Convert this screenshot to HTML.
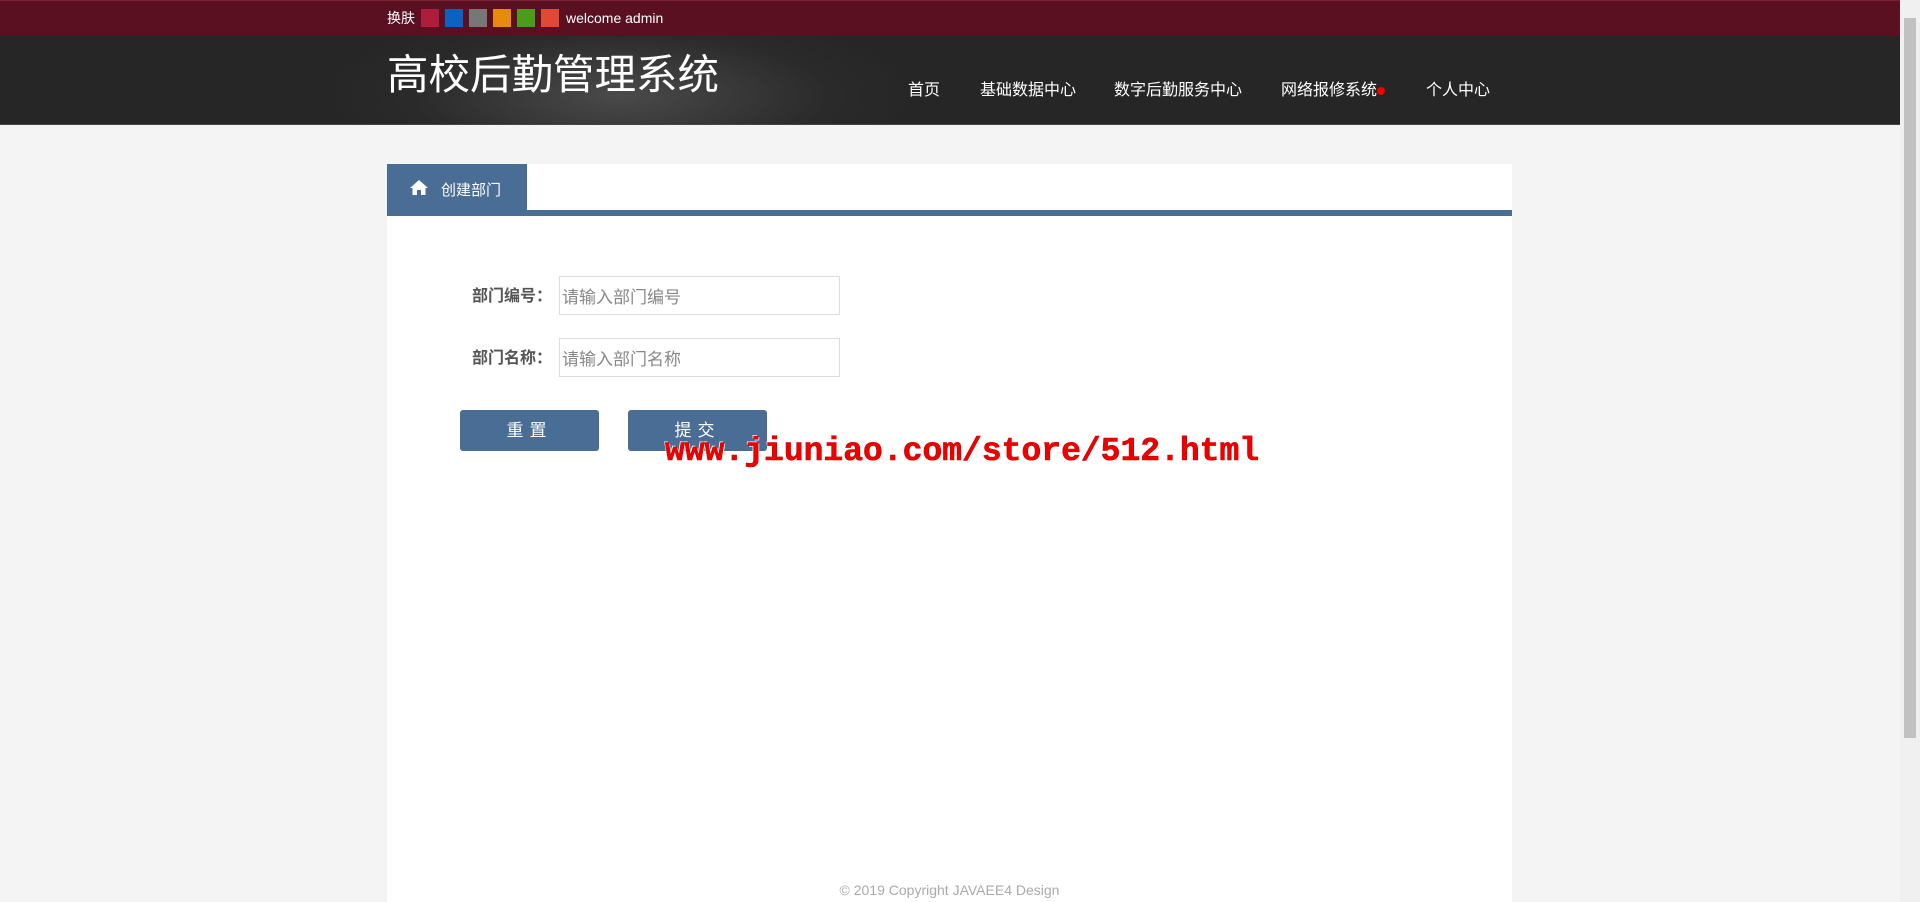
<!DOCTYPE html>
<html><head><meta charset="utf-8"><style>
*{margin:0;padding:0;box-sizing:border-box}
body{width:1920px;height:902px;overflow:hidden;background:#f4f4f4;font-family:"Liberation Sans","Noto Sans CJK SC",sans-serif;position:relative}
.top{position:absolute;left:0;top:0;width:1900px;height:36px;background:#5a1020;border-top:1px solid #7a2030}
.top .in{position:absolute;left:387px;top:7px;font-size:14px;color:#fff;display:flex;align-items:center}
.sw{width:18px;height:18px;display:inline-block;margin-left:6px}
.hdr{position:absolute;left:0;top:36px;width:1900px;height:89px;background:radial-gradient(ellipse 300px 90px at 620px 60px,#4a4a4a,#2a2a2a 70%,#262626);border-bottom:1px solid #444}
.title{position:absolute;left:387px;top:5px;font-size:41.5px;color:#fff}
.nav{position:absolute;top:40px;font-size:16px;color:#fff}
.panel{position:absolute;left:387px;top:164px;width:1125px;height:738px;background:#fff}
.tabbar{position:absolute;left:0;top:46px;width:1125px;height:6px;background:#4a6d96}
.tab{position:absolute;left:0;top:0;width:140px;height:50px;background:#4a6d96;color:#fff;font-size:15px}
.lab{position:absolute;font-size:16px;font-weight:bold;color:#555;text-align:right;width:125px}
.inp{position:absolute;left:172px;width:281px;height:39px;border:1px solid #ddd;font-size:17px;color:#888;padding:0 2px;line-height:41px}
.btn{position:absolute;top:246px;width:139px;height:41px;background:#4a6d96;border-radius:3px;color:#fff;font-size:17px;text-align:center;line-height:41px;letter-spacing:6px}
.wm{position:absolute;left:665px;top:433px;font-family:"Liberation Mono",monospace;font-weight:bold;font-size:33px;color:#e00;-webkit-text-stroke:0.6px #c00;text-shadow:1px 1px 0 #fff,-1px -1px 0 #fff}
.foot{position:absolute;left:0;width:1125px;top:718px;text-align:center;font-size:14px;color:#aaa}
.sb{position:absolute;right:0;top:0;width:20px;height:902px;background:#f0f0f0}
.sb div{position:absolute;left:4px;top:18px;width:12px;height:720px;background:#c1c1c1}
</style></head><body>
<div class="top"><div class="in">换肤<span class="sw" style="background:#b01c3c"></span><span class="sw" style="background:#0d62c0"></span><span class="sw" style="background:#777"></span><span class="sw" style="background:#e88a0c"></span><span class="sw" style="background:#4c9c1c"></span><span class="sw" style="background:#e04a34"></span><span style="margin-left:7px">welcome admin</span></div></div>
<div class="hdr">
<div class="title">高校后勤管理系统</div>
<div class="nav" style="left:908px">首页</div>
<div class="nav" style="left:980px">基础数据中心</div>
<div class="nav" style="left:1114px">数字后勤服务中心</div>
<div class="nav" style="left:1281px">网络报修系统<span style="display:inline-block;width:8px;height:8px;border-radius:50%;background:#e00;margin-left:0px"></span></div>
<div class="nav" style="left:1426px">个人中心</div>
</div>
<div class="panel">
<div class="tabbar"></div>
<div class="tab"><svg style="position:absolute;left:23px;top:15px" width="18" height="17" viewBox="0 0 18 17"><path d="M9 1L0 9h2.5v7h4.5v-5h4v5h4.5V9H18z" fill="#fff"/></svg><span style="position:absolute;left:54px;top:15px">创建部门</span></div>
<div class="lab" style="left:40px;top:118px">部门编号：</div>
<div class="inp" style="top:112px">请输入部门编号</div>
<div class="lab" style="left:40px;top:180px">部门名称：</div>
<div class="inp" style="top:174px">请输入部门名称</div>
<div class="btn" style="left:73px">重置</div>
<div class="btn" style="left:241px">提交</div>
<div class="foot">© 2019 Copyright JAVAEE4 Design</div>
</div>
<div class="wm">www.jiuniao.com/store/512.html</div>
<div class="sb"><div></div></div>
</body></html>
